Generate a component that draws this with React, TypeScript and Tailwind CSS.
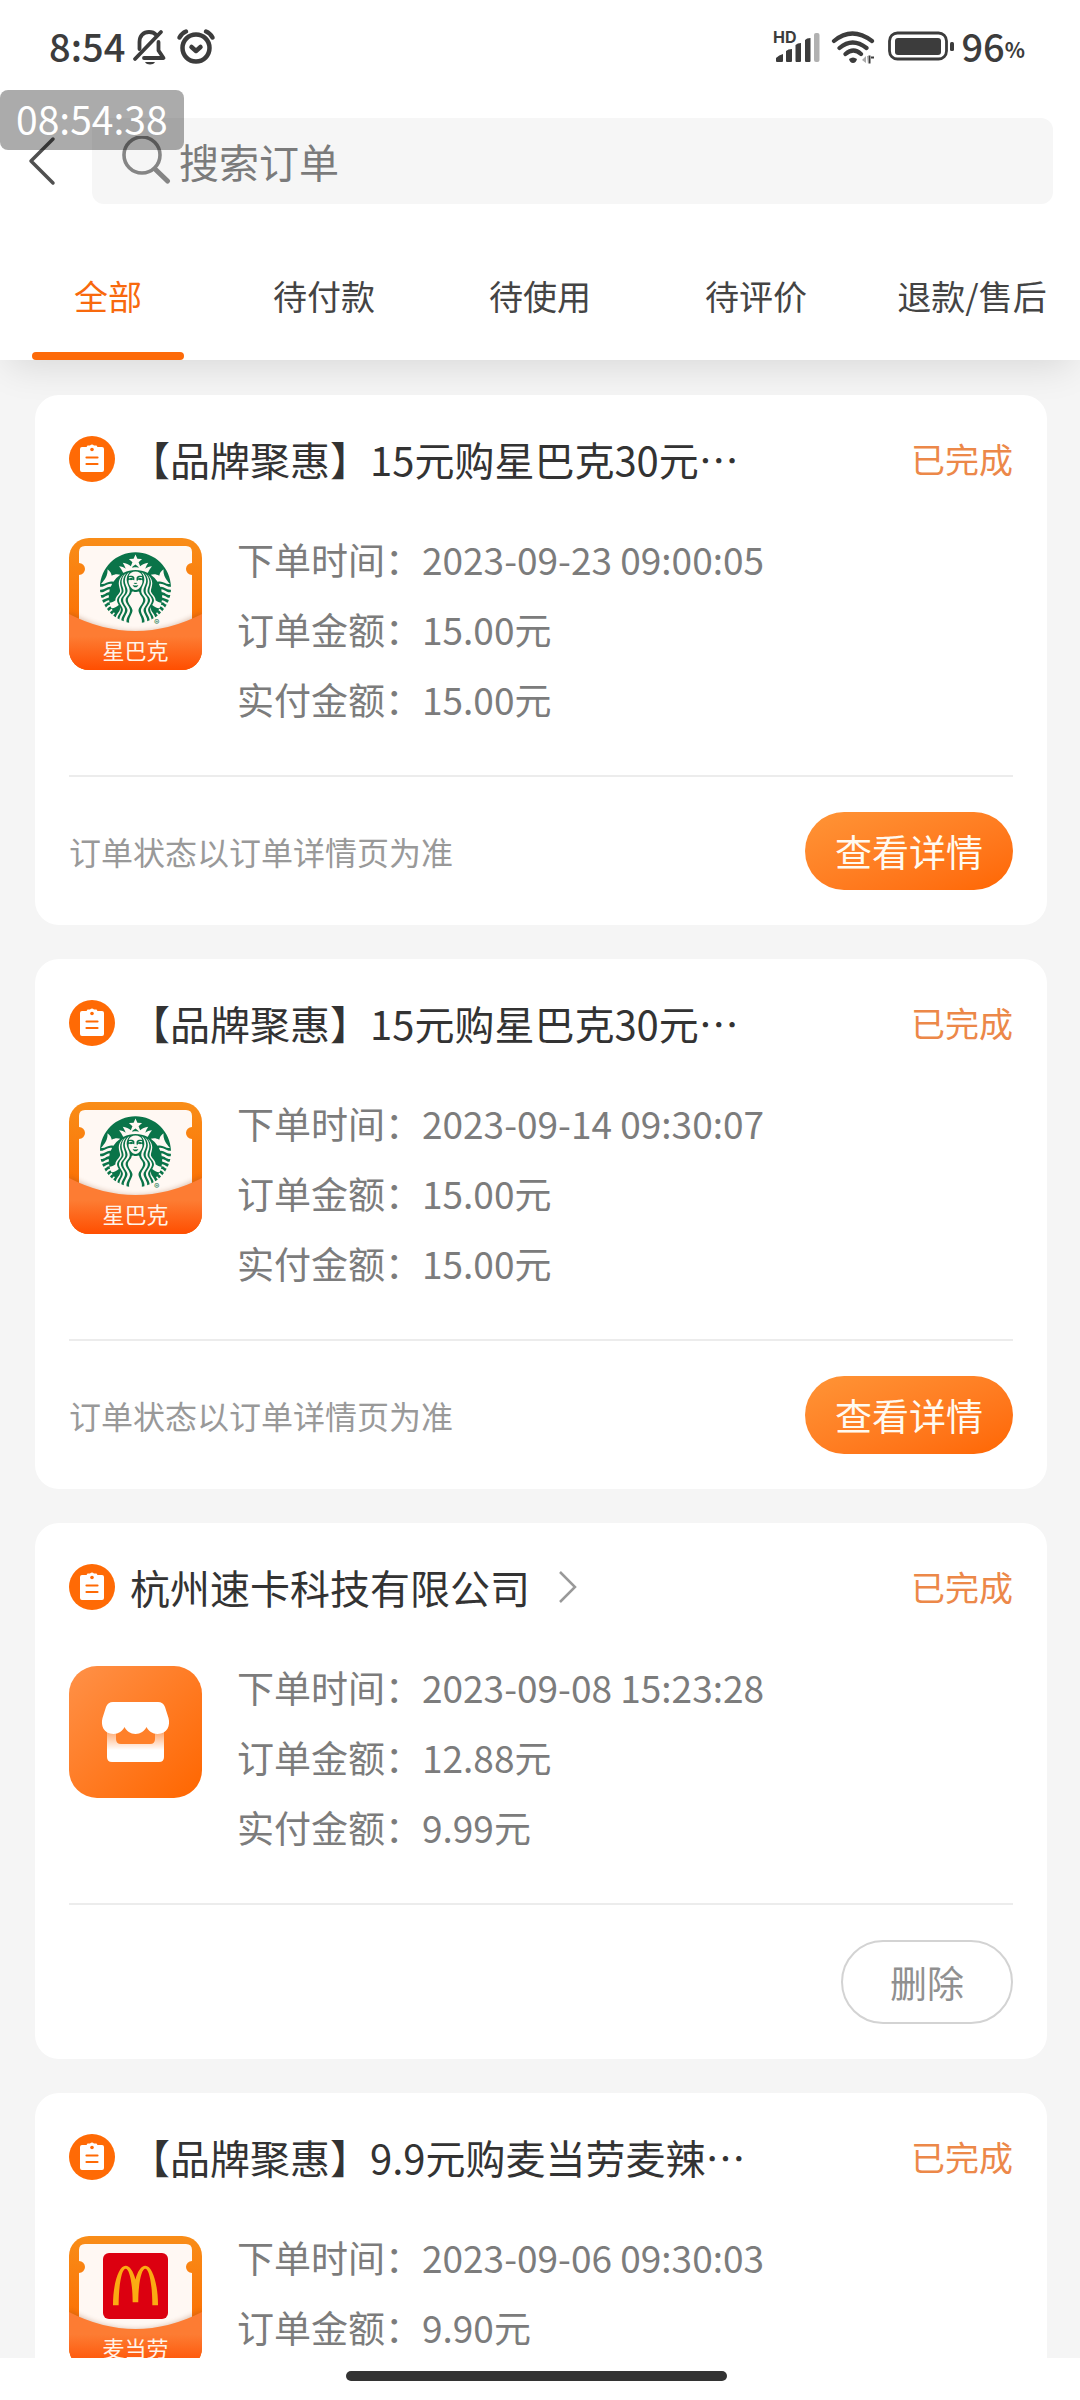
import { useState } from 'react';
import { SiMcdonalds, SiStarbucks } from 'react-icons/si';

type Brand = 'starbucks' | 'shop' | 'mcdonalds';

interface Order {
  id: number;
  title: string;
  link?: boolean;
  brand: Brand;
  time: string;
  amount: string;
  paid: string;
}

const orders: Order[] = [
  { id: 1, title: '【品牌聚惠】15元购星巴克30元…', brand: 'starbucks', time: '2023-09-23 09:00:05', amount: '15.00元', paid: '15.00元' },
  { id: 2, title: '【品牌聚惠】15元购星巴克30元…', brand: 'starbucks', time: '2023-09-14 09:30:07', amount: '15.00元', paid: '15.00元' },
  { id: 3, title: '杭州速卡科技有限公司', link: true, brand: 'shop', time: '2023-09-08 15:23:28', amount: '12.88元', paid: '9.99元' },
  { id: 4, title: '【品牌聚惠】9.9元购麦当劳麦辣…', brand: 'mcdonalds', time: '2023-09-06 09:30:03', amount: '9.90元', paid: '9.90元' },
];

const tabs = ['全部', '待付款', '待使用', '待评价', '退款/售后'];

function StatusBar() {
  return (
    <div className="flex h-[92px] items-center justify-between pr-[55px] pl-[49px] text-[#3c3c3c]">
      <div className="flex items-center">
        <span className="text-[38px] leading-[40px] font-medium">8:54</span>
        <svg className="ml-[6px] h-[40px] w-[36px]" viewBox="0 0 36 40" fill="none" stroke="currentColor" strokeWidth="3.8" strokeLinecap="round" strokeLinejoin="round" aria-label="静音">
          <path d="M4 33 30 6" />
          <path d="M8.500 23V16C8.500 9.500 12.500 6 18 6c3 0 5.500 1 7 2.800" />
          <path d="M27.500 16v8.500l5 7.500H13" />
          <path d="M14 36h10c-1 1.800-3 2.500-5 2.500s-4-.7-5-2.500z" fill="currentColor" stroke="none" />
        </svg>
        <svg className="ml-[9px] h-[40px] w-[40px]" viewBox="0 0 40 40" fill="none" stroke="currentColor" strokeWidth="4.500" strokeLinecap="round" strokeLinejoin="round" aria-label="闹钟">
          <circle cx="20" cy="22" r="13.500" />
          <path d="m15.500 21 4.500 4 4.500-4" />
          <path d="M3.500 11.500Q6 7 10 5.500M36.500 11.500Q34 7 30 5.500" />
        </svg>
      </div>
      <div className="flex items-center">
        <svg className="h-[36px] w-[48px]" viewBox="0 0 48 36" fill="currentColor" aria-label="信号">
          <text x="0" y="15" fontSize="16" fontWeight="700" fontFamily="Inter, sans-serif">HD</text>
          <path d="M3 33v-3q3-3 7-4v7q0 1-1 1H4q-1 0-1-1zM13 33V23q2-2 6-2v12q0 1-1 1h-4q-1 0-1-1zM22.500 33V17q2-2 5.500-2v18q0 1-1 1h-3.500q-1 0-1-1zM32 33V12q1.500-2 5.500-2v23q0 1-1 1H33q-1 0-1-1z" />
          <rect x="41" y="5" width="5.500" height="29" rx="2" opacity=".4" />
        </svg>
        <svg className="ml-[10px] h-[36px] w-[44px]" viewBox="0 0 44 36" fill="none" stroke="currentColor" strokeWidth="4.200" strokeLinecap="round" aria-label="无线网络">
          <path d="M3 13q18-15 38 0M8.500 20q13-11 27 0M14.500 26q8-7 15.500 0" />
          <path d="M18 31q4-3 8 0-1 4-4 4t-4-4z" fill="currentColor" stroke="none" />
          <path d="M35 28v7l-4-3zM36 28h1v8" stroke="none" fill="#aaaaaa" />
          <path d="M38.500 27.500v8M40 29.500h3" strokeWidth="2" strokeLinecap="butt" />
        </svg>
        <svg className="ml-[12px] h-[32px] w-[68px]" viewBox="0 0 68 32" fill="none" aria-label="电量">
          <rect x="2.500" y="3" width="57" height="26" rx="8" stroke="currentColor" strokeWidth="2.800" />
          <rect x="8" y="8" width="46" height="17" rx="3" fill="currentColor" />
          <rect x="63" y="12" width="4" height="9" rx="1.500" fill="currentColor" />
        </svg>
        <span className="ml-[6px] text-[38px] leading-[40px] font-medium">96</span>
        <span className="self-end text-[21px] leading-[34px] font-bold">%</span>
      </div>
    </div>
  );
}

function OrderIcon() {
  return (
    <svg className="h-[46px] w-[46px] shrink-0" viewBox="0 0 46 46" aria-hidden="true">
      <circle cx="23" cy="23" r="23" fill="#ff6a05" />
      <path d="M13 11h4.500l1-1.500h2.500q2-2 4 0h2.500l1 1.500H33q2 0 2 2v21q0 2-2 2H13q-2 0-2-2V13q0-2 2-2z" fill="#fff" />
      <circle cx="23" cy="13.500" r="1.800" fill="#ff6a05" />
      <path d="M17.500 21.500h11M17.500 28h11" stroke="#ff6a05" strokeWidth="2.200" strokeLinecap="round" />
    </svg>
  );
}

function CouponLogo({ id, brand }: { id: number; brand: 'starbucks' | 'mcdonalds' }) {
  return (
    <svg className="h-[132px] w-[133px] shrink-0" viewBox="0 0 133 132" role="img" aria-label={brand === 'starbucks' ? '星巴克' : '麦当劳'}>
      <defs>
        <linearGradient id={`back-${id}`} x1="0" y1="0" x2="0" y2="1">
          <stop offset="0" stopColor="#f98d18" />
          <stop offset="0.600" stopColor="#fb7306" />
        </linearGradient>
        <linearGradient id={`front-${id}`} x1="0" y1="0.400" x2="0" y2="1">
          <stop offset="0" stopColor="#fd7c33" />
          <stop offset="1" stopColor="#ff4e00" />
        </linearGradient>
        <clipPath id={`clip-${id}`}>
          <rect width="133" height="132" rx="20" />
        </clipPath>
        <filter id={`soft-${id}`} x="-10%" y="-30%" width="120%" height="160%">
          <feGaussianBlur stdDeviation="2.500" />
        </filter>
      </defs>
      <g clipPath={`url(#clip-${id})`}>
        <rect width="133" height="132" fill={`url(#back-${id})`} />
        <path d="M16 8H117q6 0 6 6V25a6 6 0 0 0 0 12V100H10V37a6 6 0 0 0 0-12V14q0-6 6-6z" fill="#fff8f3" />
        {brand === 'starbucks' ? (
          <>
            <SiStarbucks x="31" y="14" size={71} color="#0a7449" />
            <text x="85" y="87" fontSize="8" fill="#0a7449" fontFamily="Inter, sans-serif">®</text>
          </>
        ) : (
          <>
            <rect x="34" y="17" width="65" height="66" rx="6" fill="#dc0010" />
            <SiMcdonalds x="44" y="27" size={45} color="#fbab12" />
          </>
        )}
        <path d="M0 74Q66.500 112 133 74V132H0z" fill="#8a4a20" opacity=".3" filter={`url(#soft-${id})`} />
        <path d="M0 76Q66.500 110 133 76V132H0z" fill={`url(#front-${id})`} />
        <text x="66.500" y="121" fontSize="22" textAnchor="middle" fill="#fff3e8">{brand === 'starbucks' ? '星巴克' : '麦当劳'}</text>
      </g>
    </svg>
  );
}

function ShopLogo() {
  return (
    <svg className="h-[132px] w-[133px] shrink-0" viewBox="0 0 133 132" role="img" aria-label="店铺">
      <defs>
        <linearGradient id="shop-bg" x1="0" y1="0" x2="1" y2="1">
          <stop offset="0" stopColor="#ff9148" />
          <stop offset="1" stopColor="#ff6600" />
        </linearGradient>
        <linearGradient id="shop-body" x1="0" y1="0" x2="0" y2="1">
          <stop offset="0.150" stopColor="#fff" stopOpacity="0.400" />
          <stop offset="0.650" stopColor="#fff" />
        </linearGradient>
      </defs>
      <rect width="133" height="132" rx="28" fill="url(#shop-bg)" />
      <path d="M38 62H95V91q0 5-5 5H43q-5 0-5-5z" fill="url(#shop-body)" />
      <path d="M47 60H86V73q0 5-5 5H52q-5 0-5-5z" fill="#ff8029" />
      <path d="M44 36H89q5 0 7 5l3.500 11c2 7-1 16-11 16-5 0-9-3-11-7-2 4-6 7-11 7s-9-3-11-7c-2 4-6 7-11 7-10 0-13-9-11-16L37 41q2-5 7-5z" fill="#fff" />
    </svg>
  );
}

function OrderCard({ order }: { order: Order }) {
  return (
    <article className="rounded-[24px] bg-white px-[34px] pt-[41px]">
      <header className="flex h-[46px] items-center">
        <OrderIcon />
        <h2 className="ml-[15px] text-[40px] leading-[52px] whitespace-nowrap text-[#333333]">
          {order.link ? (
            <a href="#shop" className="flex items-center">
              {order.title}
              <svg className="ml-[28px] h-[34px] w-[20px]" viewBox="0 0 20 34" fill="none" stroke="#999999" strokeWidth="2.500" aria-hidden="true">
                <path d="m2 2 15 15L2 32" />
              </svg>
            </a>
          ) : (
            order.title
          )}
        </h2>
        <span className="ml-auto text-[34px] leading-[46px] text-[#ec8849]">已完成</span>
      </header>
      <div className="mt-[42px] flex pb-[41px]">
        <div className="mt-[14px]">
          {order.brand === 'shop' ? <ShopLogo /> : <CouponLogo id={order.id} brand={order.brand} />}
        </div>
        <dl className="ml-[35px] text-[37px] leading-[70px] text-[#7c7c7c]">
          <div className="flex">
            <dt>下单时间：</dt>
            <dd>{order.time}</dd>
          </div>
          <div className="flex">
            <dt>订单金额：</dt>
            <dd>{order.amount}</dd>
          </div>
          <div className="flex">
            <dt>实付金额：</dt>
            <dd>{order.paid}</dd>
          </div>
        </dl>
      </div>
      <footer className="flex items-center border-t-2 border-[#ececec] py-[35px]">
        {order.brand === 'shop' ? (
          <button type="button" className="ml-auto h-[84px] rounded-full border-2 border-[#d3d3d3] px-[47px] text-[37px] leading-[48px] text-[#909090]">
            删除
          </button>
        ) : (
          <>
            <p className="text-[32px] leading-[44px] text-[#999999]">订单状态以订单详情页为准</p>
            <button type="button" className="ml-auto h-[78px] rounded-full bg-linear-to-br from-[#ff9436] to-[#ff6600] px-[30px] text-[37px] leading-[48px] text-[#fffaf0]">
              查看详情
            </button>
          </>
        )}
      </footer>
    </article>
  );
}

export default function App() {
  const [active, setActive] = useState(0);

  return (
    <div lang="zh-CN" className="relative flex h-screen flex-col overflow-hidden bg-[#f5f5f5] font-['Noto_Sans_CJK_SC',sans-serif]">
      <header className="bg-white shadow-[0_14px_36px_-8px_rgba(0,0,0,0.12)]">
        <StatusBar />
        <form className="mt-[26px] flex items-center pr-[27px]" onSubmit={(event) => event.preventDefault()}>
          <button type="button" aria-label="返回" className="flex h-[86px] w-[92px] items-center pl-[27px]">
            <svg className="h-[50px] w-[30px]" viewBox="0 0 30 50" fill="none" stroke="#505050" strokeWidth="3.500" strokeLinecap="round" strokeLinejoin="round" aria-hidden="true">
              <path d="M26 3 4 25l22 22" />
            </svg>
          </button>
          <label className="flex h-[86px] flex-1 items-center rounded-[12px] bg-[#f6f6f6] pl-[29px]">
            <svg className="h-[50px] w-[50px] shrink-0" viewBox="0 0 50 50" fill="none" stroke="#858585" strokeWidth="3.600" strokeLinecap="round" aria-hidden="true">
              <circle cx="21" cy="19" r="18" />
              <path d="m34 33 12.500 12" strokeWidth="5" />
            </svg>
            <input type="search" aria-label="搜索订单" placeholder="搜索订单" className="ml-[8px] w-full min-w-0 bg-transparent text-[40px] leading-[52px] text-[#333333] outline-none placeholder:text-[#7b7b7b]" />
          </label>
        </form>
        <nav className="mt-[30px] grid grid-cols-5">
          {tabs.map((tab, index) => (
            <button
              key={tab}
              type="button"
              onClick={() => setActive(index)}
              className={`relative h-[126px] pb-[2px] text-[34px] leading-[46px] whitespace-nowrap ${index === active ? 'text-[#f8690d]' : 'text-[#444444]'}`}
            >
              {tab}
              {index === active && <span className="absolute inset-x-[15%] bottom-0 h-[8px] rounded-[4px] bg-[#fd6a08]" />}
            </button>
          ))}
        </nav>
      </header>
      <div className="absolute top-[90px] left-0 rounded-[8px] bg-black/33 px-[16px] pb-[3px] text-[39px] leading-[57px] text-white">08:54:38</div>
      <main className="flex min-h-0 flex-1 flex-col gap-[34px] overflow-y-auto pt-[35px] pr-[33px] pl-[35px] [scrollbar-width:none]">
        {orders.map((order) => (
          <OrderCard key={order.id} order={order} />
        ))}
      </main>
      <div className="flex h-[42px] shrink-0 items-center justify-center bg-white pr-[8px] pb-[6px]">
        <div className="h-[10px] w-[381px] rounded-full bg-[#333333]" />
      </div>
    </div>
  );
}
